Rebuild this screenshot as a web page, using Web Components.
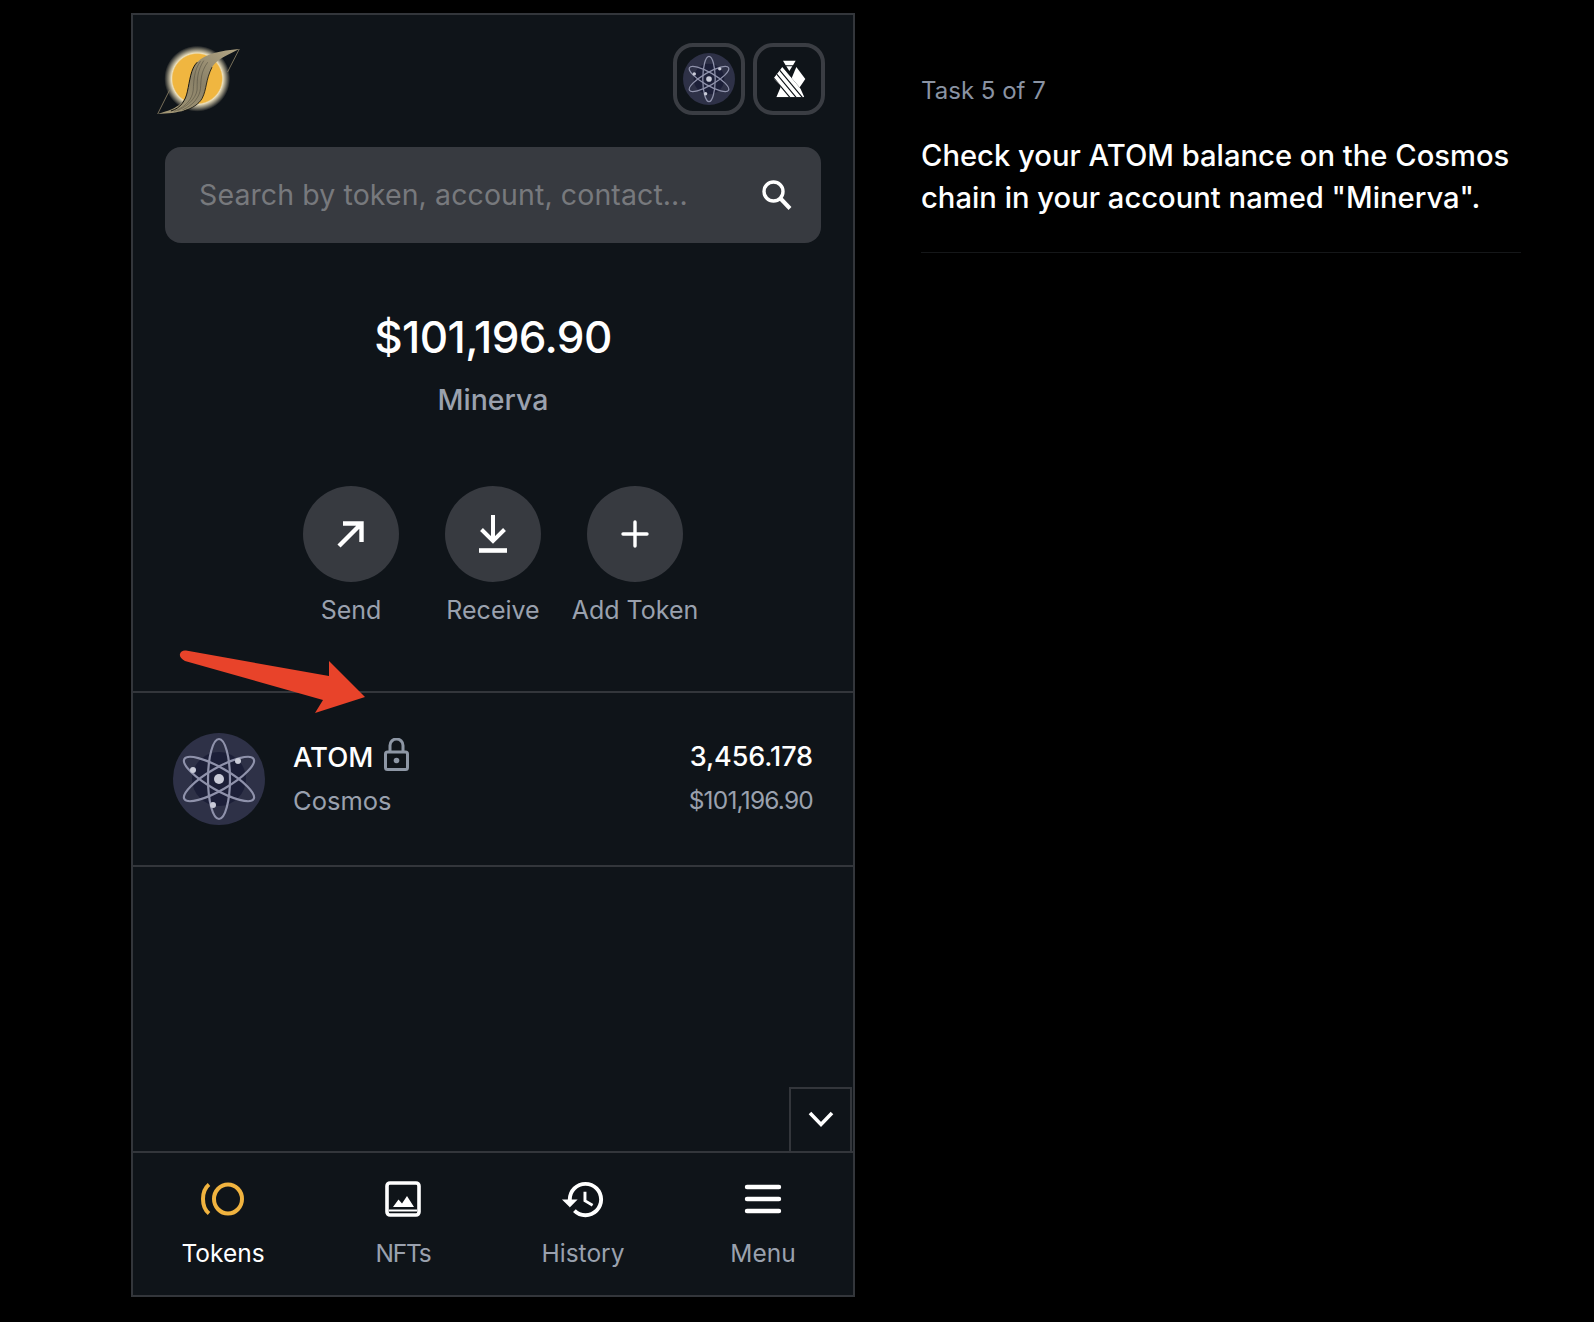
<!DOCTYPE html>
<html lang="en">
<head>
<meta charset="utf-8">
<title>Task 5 of 7</title>
<style>
  html, body { margin: 0; background: #000; }
  body { font-family: Inter, "Open Sans", sans-serif; color: #fff; }
</style>
</head>
<body>
<task-page>
  <wallet-panel slot="panel">
    <wallet-header></wallet-header>
    <search-box placeholder="Search by token, account, contact..."></search-box>
    <balance-summary amount="$101,196.90" account="Minerva"></balance-summary>
    <action-row>
      <action-button label="Send" icon="send"></action-button>
      <action-button label="Receive" icon="receive"></action-button>
      <action-button label="Add Token" icon="add"></action-button>
    </action-row>
    <token-row symbol="ATOM" chain="Cosmos" qty="3,456.178" value="$101,196.90"></token-row>
    <scroll-area></scroll-area>
    <bottom-nav>
      <nav-item label="Tokens" icon="tokens" active></nav-item>
      <nav-item label="NFTs" icon="nfts"></nav-item>
      <nav-item label="History" icon="history"></nav-item>
      <nav-item label="Menu" icon="menu"></nav-item>
    </bottom-nav>
    <pointer-arrow></pointer-arrow>
  </wallet-panel>
  <task-note slot="note" step="Task 5 of 7">Check your ATOM balance on the Cosmos chain in your account named "Minerva".</task-note>
</task-page>

<script>
const COSMOS_SVG = `
  <svg viewBox="0 0 92 92" width="100%" height="100%" style="display:block">
    <circle cx="46" cy="46" r="46" fill="#2e3147"/>
    <circle cx="46" cy="46" r="27" fill="#1c1f38"/>
    <g fill="none" stroke="#8f92ab" stroke-width="2.200">
      <ellipse cx="46" cy="46" rx="11" ry="40"/>
      <ellipse cx="46" cy="46" rx="11" ry="40" transform="rotate(60 46 46)"/>
      <ellipse cx="46" cy="46" rx="11" ry="40" transform="rotate(-60 46 46)"/>
    </g>
    <g fill="#c9cbd8">
      <circle cx="46" cy="46" r="5"/>
      <circle cx="20" cy="37" r="3"/>
      <circle cx="65" cy="28" r="3"/>
      <circle cx="40" cy="72" r="3"/>
    </g>
  </svg>`;

const ICONS = {
  send: `<svg width="40" height="40" viewBox="0 0 40 40" fill="none" stroke="#fff" stroke-width="4.400"><path d="M8 32L30 10M12 9.500H30.500V28"/></svg>`,
  receive: `<svg width="40" height="48" viewBox="0 0 40 48" fill="none" stroke="#fff" stroke-width="4"><path d="M20 5V30M8.500 19.500L20 31L31.500 19.500"/><path d="M6 40.500H34" stroke-width="4.600"/></svg>`,
  add: `<svg width="28" height="28" viewBox="0 0 28 28" fill="none" stroke="#fff" stroke-width="3.400" stroke-linecap="round"><path d="M14 2V26M2 14H26"/></svg>`,
  tokens: `<svg width="48" height="36" viewBox="0 0 48 36" fill="none" stroke="#f0b33f" stroke-width="4"><ellipse cx="29" cy="18" rx="14" ry="14.500"/><path d="M10 3.500C2 10 2 26 10 32.500"/></svg>`,
  nfts: `<svg width="38" height="38" viewBox="0 0 38 38"><rect x="3" y="3" width="32" height="32" rx="3" fill="none" stroke="#fff" stroke-width="3.600"/><path d="M9 27L14.500 19.500L18 23.500L23 16L30 27Z" fill="#fff"/><path d="M5 30.500H33" stroke="#fff" stroke-width="2"/></svg>`,
  history: `<svg width="47" height="47" viewBox="0 0 24 24" fill="#fff"><path d="M13 3a9 9 0 0 0-9 9H1l3.890 3.890.070.140L9 12H6c0-3.870 3.130-7 7-7s7 3.130 7 7-3.130 7-7 7c-1.930 0-3.680-.790-4.940-2.060l-1.420 1.420A8.954 8.954 0 0 0 13 21a9 9 0 0 0 0-18zm-1 5v5l4.280 2.540.720-1.210-3.500-2.080V8H12z"/></svg>`,
  menu: `<svg width="38" height="30" viewBox="0 0 38 30" fill="none" stroke="#fff" stroke-width="4.400" stroke-linecap="round"><path d="M3 3H35M3 15H35M3 27H35"/></svg>`
};

function define(name, render) {
  customElements.define(name, class extends HTMLElement {
    constructor() {
      super();
      this.attachShadow({ mode: 'open' });
    }
    connectedCallback() {
      this.shadowRoot.innerHTML = render(this);
    }
  });
}

define('task-page', () => `
  <style>
    :host { display: flex; align-items: flex-start; padding: 13px 0 0 131px; }
    .note { margin-left: 66px; }
  </style>
  <slot name="panel"></slot>
  <div class="note"><slot name="note"></slot></div>
`);

define('wallet-panel', () => `
  <style>
    :host {
      display: flex; flex-direction: column; position: relative; box-sizing: border-box;
      width: 724px; height: 1284px; flex: none;
      background: #0f1419; border: 2px solid #33363b;
    }
  </style>
  <slot></slot>
`);

define('wallet-header', () => `
  <style>
    :host { display: flex; align-items: flex-start; justify-content: space-between; padding: 28px 28px 0 24px; }
    .logo { width: 83px; height: 70px; display: block; margin-top: 3px; }
    .chains { display: flex; gap: 8px; }
    .chip {
      box-sizing: border-box; width: 72px; height: 72px; border: 4px solid #3a3d43; border-radius: 20px;
      display: flex; align-items: center; justify-content: center;
    }
    .atom { width: 52px; height: 52px; }
  </style>
  <svg class="logo" viewBox="48 46 252 212">
    <defs>
      <radialGradient id="sun"><stop offset="0.74" stop-color="#f0b640"/><stop offset="0.78" stop-color="#ece0bd"/><stop offset="1" stop-color="#0f1419"/></radialGradient>
      <linearGradient id="band" x1="0" y1="1" x2="1" y2="0"><stop offset="0" stop-color="#a79b78"/><stop offset="0.5" stop-color="#8a8168"/><stop offset="1" stop-color="#b3a684"/></linearGradient>
    </defs>
    <circle cx="170" cy="145" r="100" fill="url(#sun)"/>
    <path d="M298 55L262 125M50 252L86 180" stroke="#8d8367" stroke-width="2.500" fill="none"/>
    <path d="M298 55C240 60 195 70 170 95C150 115 148 150 140 185C135 210 120 235 50 252C110 250 165 240 185 205C200 175 195 150 215 110C230 85 270 70 298 55Z" fill="url(#band)"/>
    <path d="M170 95C150 115 148 150 140 185C135 210 120 235 90 243" fill="none" stroke="#14130f" stroke-width="3"/>
    <path d="M215 110C195 150 200 175 185 205C175 222 155 235 130 243" fill="none" stroke="#14130f" stroke-width="2.500"/>
    <g fill="none" stroke="#4a463a" stroke-width="1.500">
      <path d="M190 90C170 120 170 150 170 170C172 195 150 225 110 242"/>
      <path d="M202 95C180 125 182 150 180 175C178 198 160 225 125 240"/>
      <path d="M180 92C160 120 160 150 158 180C155 205 140 228 100 244"/>
    </g>
  </svg>
  <div class="chains">
    <div class="chip"><div class="atom">${COSMOS_SVG}</div></div>
    <div class="chip">
      <svg width="35" height="40" viewBox="335 88 105 120">
        <defs><clipPath id="kite"><path d="M340 146L366 112L420 176L432 203H348L362 170Z"/></clipPath></defs>
        <path d="M368 93H406L398 107H376ZM378 110H396L387 124Z" fill="#fff"/>
        <path d="M408 112L435 148L412 182L392 150Z" fill="#fff"/>
        <rect x="335" y="105" width="105" height="100" fill="#fff" clip-path="url(#kite)"/>
        <g clip-path="url(#kite)" stroke="#0f1419" stroke-width="3.500">
          <path d="M340 100L440 220M328 108L428 228M316 116L416 236M352 92L452 212M364 84L464 204"/>
        </g>
      </svg>
    </div>
  </div>
`);

define('search-box', el => `
  <style>
    :host {
      display: flex; align-items: center; justify-content: space-between; box-sizing: border-box;
      height: 96px; margin: 31px 32px 0 32px; padding: 0 28px 0 34px;
      background: #373a40; border-radius: 16px;
    }
    span { font-size: 28.500px; letter-spacing: .1px; color: #77797d; white-space: nowrap; margin-top: -2px; }
    svg { display: block; }
  </style>
  <span>${el.getAttribute('placeholder')}</span>
  <svg width="32" height="32" viewBox="0 0 32 32" fill="none" stroke="#fff"><circle cx="12.500" cy="12.500" r="9.500" stroke-width="3.400"/><path d="M19.500 19.500L29 29.500" stroke-width="4"/></svg>
`);

define('balance-summary', el => `
  <style>
    :host { display: flex; flex-direction: column; align-items: center; margin-top: 64px; }
    .amount { font-size: 44px; line-height: 60px; font-weight: 500; letter-spacing: -.6px; }
    .account { font-size: 28.500px; line-height: 40px; margin-top: 13px; color: #9aa1ae; font-weight: 500; }
  </style>
  <div class="amount">${el.getAttribute('amount')}</div>
  <div class="account">${el.getAttribute('account')}</div>
`);

define('action-row', () => `
  <style>
    :host { display: flex; justify-content: center; margin-top: 66px; }
  </style>
  <slot></slot>
`);

define('action-button', el => `
  <style>
    :host { display: flex; flex-direction: column; align-items: center; width: 142px; }
    .circle { width: 96px; height: 96px; border-radius: 50%; background: #373a40; display: flex; align-items: center; justify-content: center; }
    .label { margin-top: 13px; font-size: 25px; line-height: 30px; color: #9aa1ae; white-space: nowrap; }
  </style>
  <div class="circle">${ICONS[el.getAttribute('icon')]}</div>
  <div class="label">${el.getAttribute('label')}</div>
`);

define('token-row', el => `
  <style>
    :host {
      display: flex; align-items: center; box-sizing: border-box; height: 176px; margin-top: 66px;
      padding: 0 40px 0 40px; border-top: 2px solid #33363b; border-bottom: 2px solid #33363b;
    }
    .icon { width: 92px; height: 92px; flex: none; }
    .info { margin: -2px 0 0 28px; flex: 1; }
    .top { display: flex; align-items: center; font-size: 27.500px; line-height: 44px; font-weight: 500; }
    .top svg { margin-left: 11px; margin-top: -4px; }
    .qty { justify-content: flex-end; font-size: 27px; letter-spacing: -.1px; }
    .sub { font-size: 25.500px; line-height: 43px; color: #9aa1ae; }
    .value { font-size: 24.500px; letter-spacing: -.8px; }
    .nums { text-align: right; margin-top: -2px; }
  </style>
  <div class="icon">${COSMOS_SVG}</div>
  <div class="info">
    <div class="top">${el.getAttribute('symbol')}
      <svg width="25" height="33" viewBox="0 0 25 33" fill="none" stroke="#8e97a5" stroke-width="3"><rect x="1.500" y="14" width="22" height="17.500" rx="2"/><path d="M6 14V7.500a6.500 6.500 0 0 1 13 0V14"/><circle cx="12.500" cy="22.500" r="2.800" fill="#8e97a5" stroke="none"/></svg>
    </div>
    <div class="sub">${el.getAttribute('chain')}</div>
  </div>
  <div class="nums">
    <div class="top qty">${el.getAttribute('qty')}</div>
    <div class="sub value">${el.getAttribute('value')}</div>
  </div>
`);

define('scroll-area', () => `
  <style>
    :host { display: flex; flex: 1; align-items: flex-end; justify-content: flex-end; padding-right: 1px; }
    .down {
      box-sizing: border-box; width: 63px; height: 64px; display: flex; align-items: center; justify-content: center;
      border: 2px solid #33363b; border-bottom: 0; padding-bottom: 2px;
    }
  </style>
  <div class="down">
    <svg width="26" height="18" viewBox="0 0 26 18" fill="none" stroke="#fff" stroke-width="3.600"><path d="M2 3L13 14.500L24 3"/></svg>
  </div>
`);

define('bottom-nav', () => `
  <style>
    :host { display: grid; grid-template-columns: repeat(4, 1fr); height: 144px; box-sizing: border-box; border-top: 2px solid #33363b; }
  </style>
  <slot></slot>
`);

define('nav-item', el => `
  <style>
    :host { display: flex; flex-direction: column; align-items: center; padding-top: 27px; }
    .icon { height: 38px; display: flex; align-items: center; justify-content: center; }
    .label { margin-top: 17px; font-size: 24.500px; line-height: 36px; color: ${el.hasAttribute('active') ? '#fff' : '#9aa1ae'}; }
    .label.tight { letter-spacing: -1.200px; }
  </style>
  <div class="icon">${ICONS[el.getAttribute('icon')]}</div>
  <div class="label ${el.getAttribute('icon') === 'nfts' ? 'tight' : ''}">${el.getAttribute('label')}</div>
`);

define('pointer-arrow', () => `
  <style>
    :host { position: absolute; left: 45px; top: 635px; width: 190px; height: 70px; }
    svg { display: block; }
  </style>
  <svg width="190" height="70" viewBox="0 0 190 70">
    <path d="M8 .5L151 26L151 11L187 47L137 63L145 50L7 11Q1 8 2 4Q3 0 8 .5Z" fill="#e8432a"/>
  </svg>
`);

define('task-note', el => `
  <style>
    :host { display: block; width: 600px; }
    .step { margin-top: 61px; font-size: 24px; line-height: 34px; color: #8a93a3; }
    .text { margin-top: 27px; font-size: 29.200px; line-height: 42px; font-weight: 500; color: #fff; padding-bottom: 33px; border-bottom: 1px solid #151719; }
  </style>
  <div class="step">${el.getAttribute('step')}</div>
  <div class="text"><slot></slot></div>
`);
</script>
</body>
</html>
